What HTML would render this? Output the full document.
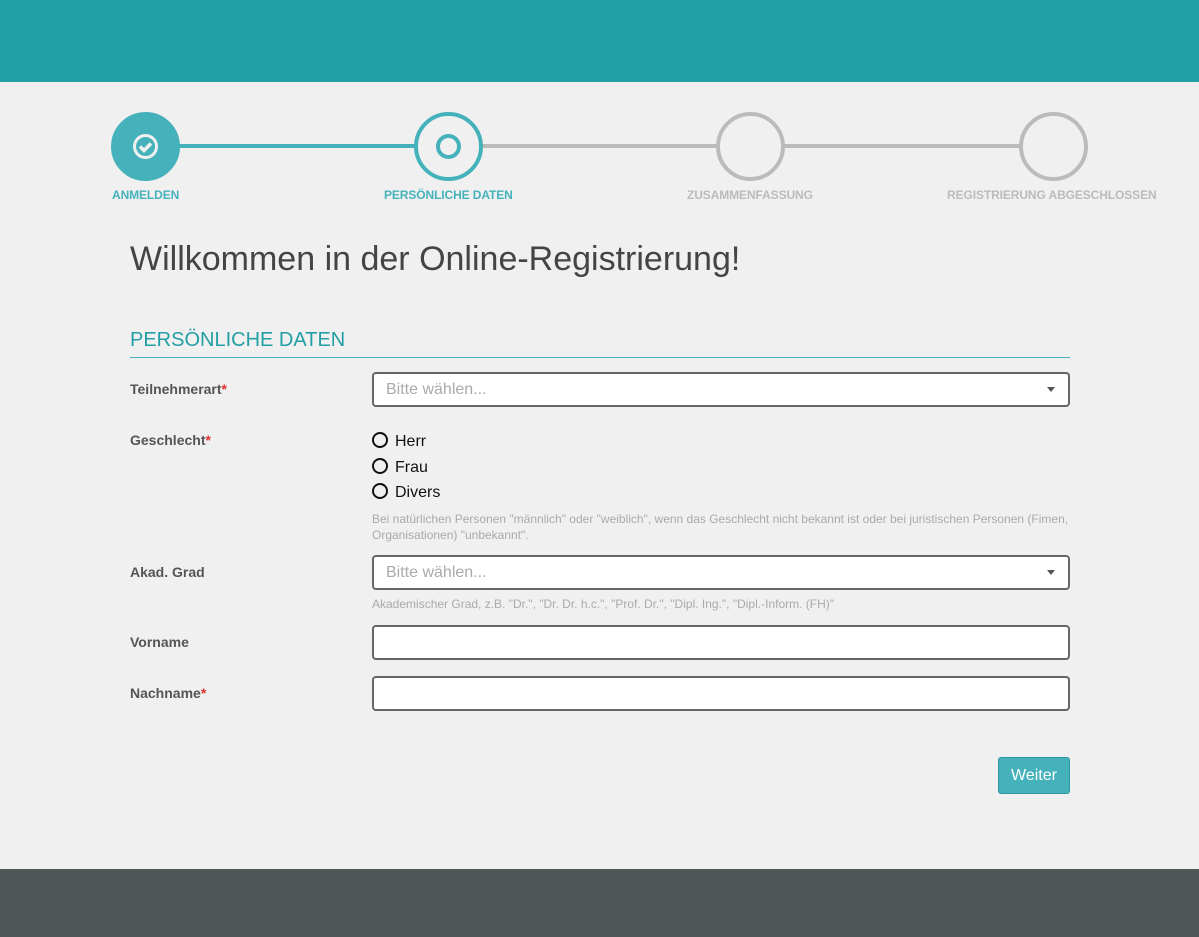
<!DOCTYPE html>
<html><head><meta charset="utf-8"><style>
*{box-sizing:border-box;margin:0;padding:0}
body{width:1199px;height:937px;background:#f0f0f0;font-family:"Liberation Sans",sans-serif;position:relative;overflow:hidden}
.top{position:absolute;left:0;top:0;width:1199px;height:82px;background:#229ea5}
.foot{position:absolute;left:0;top:869px;width:1199px;height:68px;background:#505656}
.line{position:absolute;top:144px;height:4px}
.circ{position:absolute;top:112px;width:69px;height:69px;border-radius:50%;border:4px solid #bbb}
.lbl{position:absolute;top:188px;font-size:12px;font-weight:bold;color:#bbb;letter-spacing:-.1px}
h1{position:absolute;left:130px;top:240px;font-size:34px;font-weight:normal;color:#444}
.sec{position:absolute;left:130px;top:329px;width:940px;font-size:20px;color:#229ea5;border-bottom:1px solid #45b2bb;padding-bottom:5px}
.fl{position:absolute;left:130px;font-size:14px;font-weight:bold;color:#555}
.fl span{color:#d33}
.in{position:absolute;left:372px;width:698px;height:35px;border:2px solid #666;border-radius:4px;background:#fff;font-size:16px;color:#aaa;padding:7px 12px}
.in i{position:absolute;right:13px;top:13px;border:4px solid transparent;border-top:5px solid #555}
.r{position:absolute;left:372px;font-size:16px;color:#111}
.r b{display:inline-block;width:16px;height:16px;border:2px solid #111;border-radius:50%;vertical-align:-2px;margin-right:7px}
.help{position:absolute;left:372px;font-size:12px;color:#aaa;line-height:16px;width:710px}
.btn{position:absolute;left:998px;top:757px;width:72px;height:37px;background:#45b2bb;border:1px solid #2a98a0;border-radius:3px;color:#fff;font-size:16px;text-align:center;line-height:35px}
</style></head><body>
<div class="top"></div>
<div class="line" style="left:178px;width:240px;background:#45b2bb"></div>
<div class="line" style="left:480px;width:240px;background:#bbb"></div>
<div class="line" style="left:782px;width:240px;background:#bbb"></div>
<div class="circ" style="left:111px;background:#45b2bb;border-color:#45b2bb"><svg width="61" height="61" viewBox="0 0 61 61"><circle cx="30.5" cy="30.5" r="11" fill="none" stroke="#f0f0f0" stroke-width="3"/><path d="M25 30.5l4 4 7-7" fill="none" stroke="#f0f0f0" stroke-width="3.5"/></svg></div>
<div class="circ" style="left:414px;border-color:#45b2bb"><div style="position:absolute;left:18px;top:18px;width:25px;height:25px;border:4px solid #45b2bb;border-radius:50%"></div></div>
<div class="circ" style="left:716px"></div>
<div class="circ" style="left:1019px"></div>
<div class="lbl" style="left:112px;color:#45b2bb">ANMELDEN</div>
<div class="lbl" style="left:384px;color:#45b2bb">PERSÖNLICHE DATEN</div>
<div class="lbl" style="left:687px">ZUSAMMENFASSUNG</div>
<div class="lbl" style="left:947px">REGISTRIERUNG ABGESCHLOSSEN</div>
<h1>Willkommen in der Online-Registrierung!</h1>
<div class="sec">PERSÖNLICHE DATEN</div>
<div class="fl" style="top:381px">Teilnehmerart<span>*</span></div>
<div class="in" style="top:372px">Bitte wählen...<i></i></div>
<div class="fl" style="top:432px">Geschlecht<span>*</span></div>
<div class="r" style="top:432px"><b></b>Herr</div>
<div class="r" style="top:458px"><b></b>Frau</div>
<div class="r" style="top:483px"><b></b>Divers</div>
<div class="help" style="top:511px">Bei natürlichen Personen "männlich" oder "weiblich", wenn das Geschlecht nicht bekannt ist oder bei juristischen Personen (Fimen, Organisationen) "unbekannt".</div>
<div class="fl" style="top:564px">Akad. Grad</div>
<div class="in" style="top:555px">Bitte wählen...<i></i></div>
<div class="help" style="top:596px">Akademischer Grad, z.B. "Dr.", "Dr. Dr. h.c.", "Prof. Dr.", "Dipl. Ing.", "Dipl.-Inform. (FH)"</div>
<div class="fl" style="top:634px">Vorname</div>
<div class="in" style="top:625px"></div>
<div class="fl" style="top:685px">Nachname<span>*</span></div>
<div class="in" style="top:676px"></div>
<div class="btn">Weiter</div>
<div class="foot"></div>
</body></html>
